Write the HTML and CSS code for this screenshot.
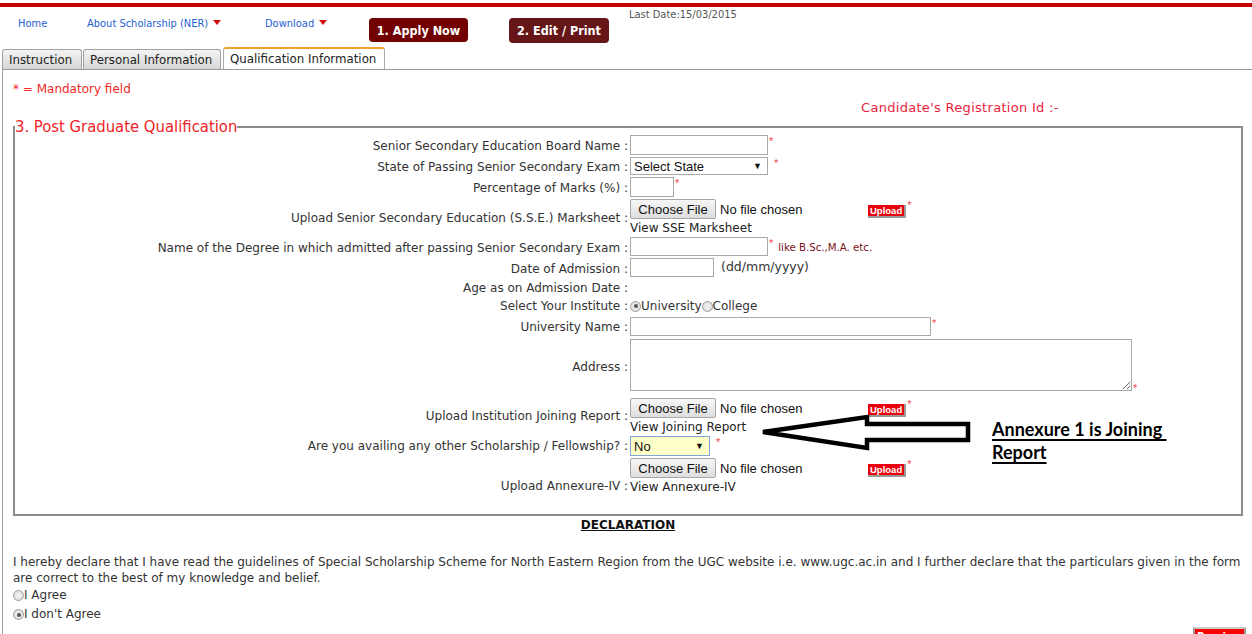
FILE: index.html
```html
<!DOCTYPE html>
<html>
<head>
<meta charset="utf-8">
<link rel="stylesheet" href="styles.css">
</head>
<body>
<div class="page">
  <div class="redline"></div>
  <div class="header">
    <a class="nav nav-home">Home</a>
    <a class="nav nav-about">About Scholarship (NER) <span class="caret"></span></a>
    <a class="nav nav-dl">Download <span class="caret"></span></a>
    <span class="hbtn hbtn1">1. Apply Now</span>
    <span class="hbtn hbtn2">2. Edit / Print</span>
    <span class="lastdate">Last Date:15/03/2015</span>
  </div>
  <div class="tabs">
    <span class="tab t1">Instruction</span>
    <span class="tab t2">Personal Information</span>
    <span class="tab t3 active">Qualification Information</span>
  </div>
  <div class="panel">
    <div class="mandatory">* = Mandatory field</div>
    <div class="regid">Candidate's Registration Id :-</div>
    <fieldset class="fs">
      <legend>3. Post Graduate Qualification</legend>
      <div class="form">
        <div class="lbl r1">Senior Secondary Education Board Name :</div>
        <div class="ctl r1"><span class="txt w138"></span><span class="ast">*</span></div>

        <div class="lbl r2">State of Passing Senior Secondary Exam :</div>
        <div class="ctl r2"><span class="sel w138"><span>Select State</span><span class="arr">▼</span></span><span class="ast ast-sp">*</span></div>

        <div class="lbl r3">Percentage of Marks (%) :</div>
        <div class="ctl r3"><span class="txt w44"></span><span class="ast">*</span></div>

        <div class="lbl r4">Upload Senior Secondary Education (S.S.E.) Marksheet :</div>
        <div class="ctl r4 col">
          <div class="filerow"><span class="file"><span class="fbtn">Choose File</span><span class="fname">No file chosen</span></span><span class="upl">Upload</span><span class="ast">*</span></div>
          <div class="view">View SSE Marksheet</div>
        </div>

        <div class="lbl r5">Name of the Degree in which admitted after passing Senior Secondary Exam :</div>
        <div class="ctl r5"><span class="txt w138"></span><span class="ast">*</span><span class="hint">like B.Sc.,M.A. etc.</span></div>

        <div class="lbl r6">Date of Admission :</div>
        <div class="ctl r6"><span class="txt w84"></span><span class="fmt">(dd/mm/yyyy)</span></div>

        <div class="lbl r7">Age as on Admission Date :</div>
        <div class="ctl r7"></div>

        <div class="lbl r8">Select Your Institute :</div>
        <div class="ctl r8"><span class="radio on"></span><span class="rtext">University</span><span class="radio"></span><span class="rtext">College</span></div>

        <div class="lbl r9">University Name :</div>
        <div class="ctl r9"><span class="txt w301"></span><span class="ast">*</span></div>

        <div class="lbl r10">Address :</div>
        <div class="ctl r10"><textarea class="ta"></textarea><span class="ast ast-bot">*</span></div>

        <div class="lbl r11">Upload Institution Joining Report :</div>
        <div class="ctl r11 col">
          <div class="filerow"><span class="file"><span class="fbtn">Choose File</span><span class="fname">No file chosen</span></span><span class="upl">Upload</span><span class="ast">*</span></div>
          <div class="view">View Joining Report</div>
        </div>

        <div class="lbl r12">Are you availing any other Scholarship / Fellowship? :</div>
        <div class="ctl r12"><span class="sel ysel"><span>No</span><span class="arr">▼</span></span><span class="ast ast-sp">*</span></div>

        <div class="lbl r13">Upload Annexure-IV :</div>
        <div class="ctl r13 col">
          <div class="filerow"><span class="file"><span class="fbtn">Choose File</span><span class="fname">No file chosen</span></span><span class="upl">Upload</span><span class="ast">*</span></div>
          <div class="view">View Annexure-IV</div>
        </div>
      </div>
    </fieldset>
    <div class="decl-title"><span>DECLARATION</span></div>
    <p class="decl">I hereby declare that I have read the guidelines of Special Scholarship Scheme for North Eastern Region from the UGC website i.e. www.ugc.ac.in and I further declare that the particulars given in the form are correct to the best of my knowledge and belief.</p>
    <div class="agree"><span class="radio"></span>I Agree</div>
    <div class="agree"><span class="radio on"></span>I don't Agree</div>
    <div class="footer"><span class="prev">Preview</span></div>
  </div>

  <svg class="arrow" width="216" height="40" viewBox="0 0 216 40">
    <polygon points="5,18 109,3 109,10 210,10 210,26 109,26 109,34" fill="#fff" stroke="#000" stroke-width="4.5" stroke-linejoin="miter"/>
  </svg>
  <div class="note"><span>Annexure 1 is Joining </span><br><span>Report</span></div>
</div>
</body>
</html>
```
FILE: styles.css
```css
html, body { margin: 0; padding: 0; background: #fff; }
body { overflow: hidden; font-family: "DejaVu Sans", sans-serif; font-size: 12px; color: #333; }
.page { position: relative; width: 1252px; height: 634px; overflow: hidden; }

.redline { margin-top: 3px; height: 4px; background: #c80000; }

.header { display: flex; align-items: flex-start; height: 42px; font-family: "DejaVu Sans Condensed", "DejaVu Sans", sans-serif; }
.nav { display: inline-block; margin-top: 10px; font-size: 11px; color: #1f5fcf; line-height: 14px; white-space: nowrap; }
.nav-home { margin-left: 18px; width: 69px; }
.nav-about { width: 178px; }
.nav-dl { width: 104px; }
.caret { display: inline-block; width: 0; height: 0; border-left: 4.5px solid transparent; border-right: 4.5px solid transparent; border-top: 5px solid #d01010; vertical-align: 2px; margin-left: 2px; }
.hbtn { display: inline-flex; align-items: center; justify-content: center; margin-top: 11px; height: 24px; border-radius: 4px; color: #fff; font-weight: bold; font-size: 12.5px; }
.hbtn1 { width: 99px; background: #720000; }
.hbtn2 { width: 100px; margin-left: 41px; background: #661616; height: 25px; }
.lastdate { margin-left: 20px; margin-top: 1px; font-size: 11px; color: #555; }

.tabs { display: flex; align-items: flex-end; height: 20px; padding-left: 2px; position: relative; z-index: 1; }
.tab { display: inline-flex; align-items: center; box-sizing: border-box; height: 20px; padding: 0 6px; border: 1px solid #a0a0a0; border-bottom: none; border-radius: 3px 3px 0 0; background: linear-gradient(#f4f4f4, #d6d6d6); color: #222; font-size: 11.8px; margin-right: 1px; white-space: nowrap; }
.t1 { width: 80px; }
.t2 { width: 138px; }
.t3 { width: 162px; margin-left: 1px; }
.tab.active { background: #fff; height: 22px; border-top: 2px solid #f0a030; border-color: #f0a030 #aaa #aaa #aaa; }

.panel { margin-left: 2px; width: 1270px; border: 1px solid #9a9a9a; height: 600px; box-sizing: border-box; padding-left: 10px; }
.mandatory { color: #f02828; margin-top: 12px; line-height: 14px; }
.regid { color: #ea1e3c; margin-left: 848px; margin-top: 5px; line-height: 14px; font-size: 13px; letter-spacing: 0.3px; }

.fs { margin: 3px 0 0 0; width: 1230px; box-sizing: border-box; padding: 0 0 19px 0; border: 2px solid #8c8c8c; min-inline-size: 0; }
.fs legend { padding: 0; margin-left: 0; font-family: "DejaVu Sans Condensed", "DejaVu Sans", sans-serif; font-size: 16.5px; color: #f01e28; line-height: 17px; }

.form { display: grid; grid-template-columns: 613px 1fr; column-gap: 2px; }
.lbl { display: flex; justify-content: flex-end; align-items: center; white-space: nowrap; color: #333; }
.ctl { display: flex; align-items: center; }
.ctl.col { flex-direction: column; align-items: flex-start; justify-content: flex-start; }

.r1 { height: 22px; } .ctl.r1 { align-items: flex-start; }
.r2 { height: 20px; } .ctl.r2 { align-items: flex-start; }
.r3 { height: 22px; } .ctl.r3 { align-items: flex-start; }
.r4 { height: 38px; }
.r5 { height: 21px; } .ctl.r5 { align-items: flex-start; }
.r6 { height: 21px; } .ctl.r6 { align-items: flex-start; }
.r7 { height: 18px; }
.r8 { height: 18px; }
.r9 { height: 23px; } .ctl.r9 { align-items: flex-start; padding-top: 2px; box-sizing: border-box; }
.r10 { height: 58px; } .ctl.r10 { align-items: flex-start; padding-top: 1px; box-sizing: border-box; }
.r11 { height: 39px; } .ctl.r11 { padding-top: 2px; box-sizing: border-box; }
.r12 { height: 22px; } .ctl.r12 { align-items: flex-start; padding-top: 1px; box-sizing: border-box; }
.r13 { height: 38px; } .ctl.r13 { padding-top: 1px; box-sizing: border-box; }
.lbl.r13 { align-items: flex-end; padding-bottom: 2px; box-sizing: border-box; }

.txt { display: inline-block; box-sizing: border-box; height: 20px; border: 1px solid #a9a9a9; background: #fff; }
.w138 { width: 138px; }
.w44 { width: 44px; }
.w84 { width: 84px; height: 19px; }
.w301 { width: 301px; height: 19px; }
.r5 .txt { height: 19px; }
.ast { color: #f04848; font-size: 11px; line-height: 11px; margin-left: 1px; align-self: flex-start; padding-top: 1px; font-family: "Liberation Sans", sans-serif; }
.ast-sp { margin-left: 6px; }
.ast-bot { align-self: flex-end; padding-bottom: 2px; }

.sel { display: inline-flex; align-items: center; justify-content: space-between; box-sizing: border-box; height: 18px; padding: 0 5px 0 3px; border: 1px solid #a9a9a9; background: #fff; font-family: "Liberation Sans", sans-serif; font-size: 13px; color: #111; }
.sel .arr { font-size: 9px; color: #111; }
.ysel { width: 80px; height: 20px; background: #ffffc8; border-color: #7ea6d8; }

.filerow { display: flex; align-items: flex-start; height: 20px; flex: none; }
.file { display: flex; align-items: center; width: 238px; height: 20px; }
.fbtn { display: inline-flex; align-items: center; justify-content: center; box-sizing: border-box; width: 86px; height: 20px; border: 1px solid #a6a6a6; border-radius: 2px; background: linear-gradient(#f6f6f6, #dedede); font-family: "Liberation Sans", sans-serif; font-size: 13px; color: #111; }
.fname { margin-left: 4px; font-family: "Liberation Sans", sans-serif; font-size: 13px; color: #111; }
.upl { display: inline-block; margin-top: 6px; box-sizing: border-box; height: 13px; padding: 0 2px; background: #e8000c; color: #fff; font-weight: bold; font-size: 9.5px; line-height: 11px; border-right: 2px solid #999; border-bottom: 2px solid #999; font-family: "Liberation Sans", sans-serif; }
.view { line-height: 16px; margin-top: 1px; font-size: 12px; color: #222; }

.hint { color: #7a1020; font-size: 10.2px; margin-left: 5px; padding-top: 5px; }
.fmt { margin-left: 7px; color: #333; font-size: 12.5px; padding-top: 1px; }

.radio { display: inline-block; box-sizing: border-box; width: 11px; height: 11px; border-radius: 50%; border: 1px solid #9a9a9a; background: radial-gradient(circle, #f4f4f4, #d8d8d8); position: relative; }
.radio.on::after { content: ""; position: absolute; left: 2.5px; top: 2.5px; width: 4px; height: 4px; border-radius: 50%; background: #555; }

.ta { display: block; box-sizing: border-box; width: 502px; height: 52px; border: 1px solid #a9a9a9; margin: 0; padding: 2px; resize: both; font-family: inherit; }

.decl-title { width: 1230px; text-align: center; margin-top: 1px; font-weight: bold; line-height: 16px; color: #111; }
.decl-title span { text-decoration: underline; }
.decl { margin: 21px 0 0 0; width: 1232px; line-height: 16px; color: #333; }
.agree { line-height: 19px; height: 19px; color: #333; display: flex; align-items: center; }
.agree:first-of-type { margin-top: 1px; }

.footer { width: 1233px; display: flex; justify-content: flex-end; margin-top: 3px; }
.prev { display: inline-block; background: #f00; color: #fff; font-weight: bold; font-size: 10px; padding: 0 2px; height: 16px; line-height: 16px; border: 2px solid #999; border-top-color: #ccc; }

.arrow { position: absolute; left: 758px; top: 414px; }
.note { position: absolute; left: 992px; top: 418px; font-family: Lato, "Liberation Sans", sans-serif; font-weight: bold; font-size: 18px; line-height: 23px; color: #000; }
.note span { text-decoration: underline; text-decoration-thickness: 2px; text-underline-offset: 3px; white-space: pre; }
```
